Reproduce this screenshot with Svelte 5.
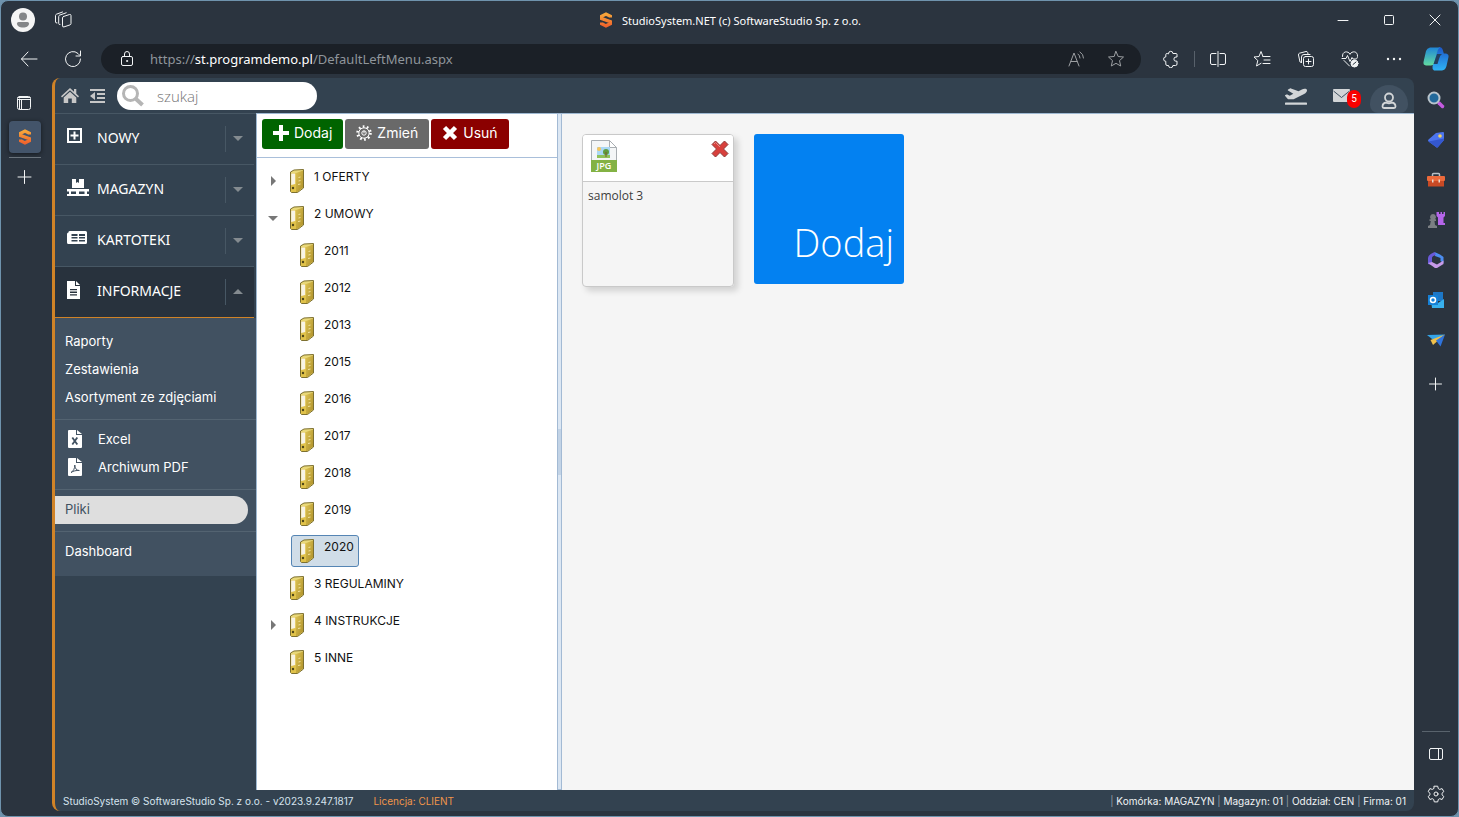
<script lang="ts">
  type MenuItem = { id: string; label: string; open?: boolean };
  type Folder = { label: string; level: number; toggle?: 'open' | 'closed' };

  const menu: MenuItem[] = [
    { id: 'new', label: 'NOWY' },
    { id: 'stock', label: 'MAGAZYN' },
    { id: 'cards', label: 'KARTOTEKI' },
    { id: 'info', label: 'INFORMACJE', open: true }
  ];

  const submenu = [
    [{ label: 'Raporty' }, { label: 'Zestawienia' }, { label: 'Asortyment ze zdjęciami' }],
    [{ label: 'Excel', icon: 'xls' }, { label: 'Archiwum PDF', icon: 'pdf' }],
    [{ label: 'Pliki', active: true }],
    [{ label: 'Dashboard' }]
  ] as { label: string; icon?: string; active?: boolean }[][];

  const folders: Folder[] = [
    { label: '1 OFERTY', level: 0, toggle: 'closed' },
    { label: '2 UMOWY', level: 0, toggle: 'open' },
    { label: '2011', level: 1 },
    { label: '2012', level: 1 },
    { label: '2013', level: 1 },
    { label: '2015', level: 1 },
    { label: '2016', level: 1 },
    { label: '2017', level: 1 },
    { label: '2018', level: 1 },
    { label: '2019', level: 1 },
    { label: '2020', level: 1 },
    { label: '3 REGULAMINY', level: 0 },
    { label: '4 INSTRUKCJE', level: 0, toggle: 'closed' },
    { label: '5 INNE', level: 0 }
  ];

  let selected = $state('2020');
  let search = $state('');
</script>

{#snippet logo(size: number)}
  <svg width={size} height={size} viewBox="0 0 16 16">
    <defs>
      <linearGradient id="logo-fill" x1="0" y1="0" x2="0" y2="1">
        <stop offset="0" stop-color="#f7a63a" />
        <stop offset="1" stop-color="#f0642c" />
      </linearGradient>
    </defs>
    <path fill="none" stroke="url(#logo-fill)" stroke-width="3.400" d="M12.300 5.600V4.300L8 2.100 3.700 4.300v2.200l8.600 3.200v2.100L8 13.900l-4.300-2.200v-1.300" />
  </svg>
{/snippet}

{#snippet menuIcon(id: string)}
  <svg class="menu-icon" width="24" height="20" viewBox="0 0 24 20">
    {#if id === 'new'}
      <path fill="none" stroke="#fff" stroke-width="2" d="M1 2h13v13H1z" />
      <path fill="none" stroke="#fff" stroke-width="2" d="M7.500 4.500v8M3.500 8.500h8" />
    {:else if id === 'stock'}
      <path fill="#fff" d="M5 1h4v4l1.500-1L12 5V1h5v9H5zM0 11h22v2.500h-2V16h2v2H0v-2h2v-2.500H0zm4 2.500V16h5v-2.500zm8 0V16h5.500v-2.500z" />
    {:else if id === 'cards'}
      <path fill="#fff" fill-rule="evenodd" d="M3 2h15.500q1.500 0 1.500 1.500v10q0 1.500-1.500 1.500h-17Q0 15 0 13.500V5q0-1.500 1.500-1.500V3Q1.500 2 3 2zM4.500 5v2h6V5zm7.500 0v2h6V5zM4.500 8v1.500h6V8zm7.500 0v1.500h6V8zm-7.500 3v1.500h6V11zm7.500 0v1.500h6V11z" />
    {:else}
      <path fill="#fff" fill-rule="evenodd" d="M0 1h8v5h5v13H0zM3 9v1.300h7V9zm0 2.600v1.300h7v-1.300zm0 2.600v1.300h7v-1.300z" />
      <path fill="#fff" d="M9 1l4 4H9z" />
    {/if}
  </svg>
{/snippet}

{#snippet fileIcon(kind: string)}
  <svg width="14" height="18" viewBox="0 0 14 18">
    <path fill="#fff" d="M1 0h7v5h6v12q0 1-1 1H1q-1 0-1-1V1q0-1 1-1zM9 0l5 4H9z" />
    {#if kind === 'xls'}
      <path fill="none" stroke="#415161" stroke-width="1.800" d="M4.300 7.500l5 7M9.300 7.500l-5 7" />
    {:else}
      <path fill="none" stroke="#415161" d="M3 14.500c2-1 4-4 3.800-7.500 0 3 1.500 5.500 4.500 5.500-3-.300-6 .500-8.300 2z" />
    {/if}
  </svg>
{/snippet}

{#snippet binder()}
  <svg width="16" height="26" viewBox="0 0 16 26">
    <defs>
      <linearGradient id="binder-face" x1="0" y1="0" x2="1" y2="1">
        <stop offset="0" stop-color="#dcc253" />
        <stop offset="1" stop-color="#ae9029" />
      </linearGradient>
    </defs>
    <path fill="#e9d878" stroke="#7d7030" d="M1.500 4L5 2l9.500-.500V20L8.500 24.500h-6l-1-1z" />
    <path fill="#e0c24a" d="M2 5h5v19H2z" />
    <path fill="#f8f4e6" d="M2.200 5.500h4V16l-4 1z" />
    <path fill="url(#binder-face)" d="M7 5l7-2.500v17L8.500 24H7z" />
    <path fill="none" stroke="#f2e3a0" d="M9.500 9.500l2-.500M9.500 13l2-.500M9 16.500l2.500-.500" />
    <circle cx="4" cy="20" r="1.200" fill="#4e4618" />
  </svg>
{/snippet}

<div class="window">
  <header class="titlebar">
    <div class="title-left">
      <button class="profile" aria-label="Profil">
        <svg width="24" height="24" viewBox="0 0 24 24">
          <circle cx="12" cy="12" r="12" fill="#f5f5f5" />
          <circle cx="12" cy="8.500" r="4" fill="#848688" />
          <path fill="#848688" d="M7.500 14h9q1.500 0 1.500 1.500c0 2.500-2.500 4-6 4s-6-1.500-6-4Q6 14 7.500 14z" />
        </svg>
      </button>
      <button class="icon-btn" aria-label="Obszary robocze">
        <svg class="line" width="18" height="18" viewBox="0 0 18 18">
          <path d="M9.500 5.500l6-2q1.500-.300 1.500 1v8q0 1-1 1.400l-6 2q-1.500.400-1.500-1v-8q0-1 1-1.400zM6 13.500q-1.300.300-1.300-1v-7q0-1 1-1.400l6.500-2.300M3 12q-1.500.200-1.500-1V4.600q0-1 1-1.400L8.500 1" />
        </svg>
      </button>
    </div>
    <div class="page-title">{@render logo(16)}<span>StudioSystem.NET (c) SoftwareStudio Sp. z o.o.</span></div>
    <div class="window-controls">
      <button aria-label="Minimalizuj"><svg class="line" width="12" height="12" viewBox="0 0 12 12"><path d="M1 6.500h10" /></svg></button>
      <button aria-label="Maksymalizuj"><svg class="line" width="12" height="12" viewBox="0 0 12 12"><rect x="1.500" y="1.500" width="9" height="9" rx="1" /></svg></button>
      <button aria-label="Zamknij"><svg class="line" width="12" height="12" viewBox="0 0 12 12"><path d="M1 1l10 10M11 1L1 11" /></svg></button>
    </div>
  </header>

  <nav class="toolbar">
    <button class="tool" aria-label="Wstecz"><svg class="line" width="18" height="18" viewBox="0 0 18 18"><path d="M17 9H1.500M8 2L1.500 9 8 16" /></svg></button>
    <button class="tool" aria-label="Odśwież"><svg class="line" width="18" height="18" viewBox="0 0 18 18"><path d="M16.500 9A7.500 7.500 0 1 1 14 3.500l2 2M16.500 1v5H12" /></svg></button>
    <div class="address">
      <svg class="line" width="16" height="18" viewBox="0 0 16 18"><rect x="2.500" y="6.500" width="11" height="9" rx="1.500" /><path d="M5.500 6.500V4a2.500 2.500 0 0 1 5 0v2.500" /><circle cx="8" cy="11" r=".6" /></svg>
      <span class="url">https://<b>st.programdemo.pl</b>/DefaultLeftMenu.aspx</span>
      <button class="address-btn" aria-label="Czytaj na głos"><svg class="line" width="18" height="18" viewBox="0 0 18 18"><path d="M2 16L7 3l5 13M4 11.500h6M11 4q2 1.500 2 4M13 2q3.500 2 3.500 6" /></svg></button>
      <button class="address-btn" aria-label="Ulubione"><svg class="line" width="18" height="18" viewBox="0 0 18 18"><path d="M9 1.500l2.200 5 5.300.500-4 3.600 1.200 5.400L9 13.300 4.300 16l1.200-5.400-4-3.600 5.300-.500z" /></svg></button>
    </div>
    <button class="tool" aria-label="Rozszerzenia"><svg class="line" width="18" height="18" viewBox="0 0 18 18"><path d="M6.500 3.500a2.200 2.200 0 0 1 4.400 0H14q1 0 1 1V7h-1a2 2 0 0 0 0 4.200h1V14q0 1.500-1.500 1.500h-2.600a2.200 2.200 0 0 1-4.400 0H5Q3.800 15.500 3.800 14v-2.700a2.200 2.200 0 0 1 0-4.400V4.500q0-1 1-1z" /></svg></button>
    <span class="tool-divider"></span>
    <button class="tool" aria-label="Podziel ekran"><svg class="line" width="18" height="18" viewBox="0 0 18 18"><path d="M7 3.500H3q-1.500 0-1.500 1.500v8q0 1.500 1.500 1.500h4M11 3.500h4q1.500 0 1.500 1.500v8q0 1.500-1.500 1.500h-4M9 1.500v15" /></svg></button>
    <button class="tool" aria-label="Lista ulubionych"><svg class="line" width="18" height="18" viewBox="0 0 18 18"><path d="M10 6.500L8 1.500 6 6.500l-5 .500 3.800 3.500-1.300 5.500 4.500-2.700M10 6.500h7M11 10h6M10 13.500h7" /></svg></button>
    <button class="tool" aria-label="Kolekcje"><svg class="line" width="18" height="18" viewBox="0 0 18 18"><rect x="6.500" y="6.500" width="10" height="10" rx="2" /><path d="M11.500 9v5M9 11.500h5M4.500 12.500L3 12 1.500 5Q1.300 3.600 2.500 3.200L9 1.500q1.300-.200 1.700 1L11 4M4.500 12.500V7Q4.500 4.500 7 4.500h6" /></svg></button>
    <button class="tool" aria-label="Podstawowe elementy przeglądarki"><svg class="line" width="18" height="18" viewBox="0 0 18 18"><path d="M9 4C7 .500 1 1 1.500 6.500M9 4c2-3.500 8-3 7.500 2.500q0 1-.7 2M3 10.500L8.500 16M1 8.500h4l1.500-3 2.500 6 2-4 1 1.500h3" /><circle cx="13.500" cy="13.500" r="3.500" fill="#f2f4f5" /><path class="dark" d="M12 14.500l3-2.500" /></svg></button>
    <button class="tool" aria-label="Więcej"><svg width="18" height="18" viewBox="0 0 18 18" fill="#f2f4f5"><circle cx="3" cy="9" r="1.200" /><circle cx="9" cy="9" r="1.200" /><circle cx="15" cy="9" r="1.200" /></svg></button>
    <button class="side-btn" aria-label="Copilot">
      <svg width="26" height="24" viewBox="0 0 26 24">
        <defs>
          <linearGradient id="cop-a" x1="0" y1="0" x2="0" y2="1"><stop offset="0" stop-color="#1f86d8" /><stop offset="1" stop-color="#62dba0" /></linearGradient>
          <linearGradient id="cop-b" x1="0" y1="0" x2="0" y2="1"><stop offset="0" stop-color="#1c55c8" /><stop offset="1" stop-color="#2fb4f5" /></linearGradient>
        </defs>
        <path fill="url(#cop-b)" d="M12 8l4-8q3 0 3.800 3l1 3.500H23q3 .500 2.500 3.500l-2 9q-1 4-4.500 4.500h-8q-2-1-1.500-4z" />
        <path fill="url(#cop-a)" d="M7 .500h10q-2 1-3 5l-3 11q-.700 2-3 2H3q-3-.500-2.500-3.500L3 4q1-3 4-3.500z" />
        <path fill="#24405f" d="M14 7h5q-2 1-3 5l-1.500 5h-4z" />
      </svg>
    </button>
  </nav>

  <div class="body">
    <aside class="tabs">
      <button class="tab" aria-label="Karty pionowe"><svg class="line" width="16" height="16" viewBox="0 0 16 16"><rect x=".5" y="1.500" width="13" height="13" rx="2" /><path d="M1 4.500h12M4.500 4.500v10M1 2.500h12M2.500 4v10" /></svg></button>
      <button class="tab current" aria-label="StudioSystem.NET">{@render logo(16)}</button>
      <hr />
      <button class="tab" aria-label="Nowa karta"><svg class="line" width="16" height="16" viewBox="0 0 16 16"><path d="M7.500 1.500v13M1 8h13" /></svg></button>
    </aside>

    <div class="app">
      <header class="app-header">
        <a href="/home" aria-label="Strona główna"><svg width="18" height="16" viewBox="0 0 18 16" fill="#c7c7c7"><path d="M9 0l4 3.700V1h2.300v4.800L18 8.300l-1 1.200-8-7.200-8 7.200L0 8.300z" /><path d="M9 3.800l6.300 5.600V15h-4.500v-4.500H7.200V15H2.700V9.400z" /></svg></a>
        <button class="icon-btn" aria-label="Zwiń menu"><svg width="16" height="16" viewBox="0 0 16 16" fill="#c7c7c7"><path d="M0 1h15v2H0zM7 5h8v2H7zM7 9h8v2H7zM0 13h15v2H0zM5 4v8L0 8z" /></svg></button>
        <label class="search">
          <svg width="22" height="22" viewBox="0 0 22 22" fill="none" stroke="#b5b5b5"><circle cx="8.500" cy="8.500" r="7" stroke-width="3" /><path stroke-width="4" d="M14 14l6.500 6" /></svg>
          <input type="text" placeholder="szukaj" aria-label="szukaj" bind:value={search} />
        </label>
        <div class="header-right">
          <button class="icon-btn" aria-label="Wyjazdy">
            <svg width="22" height="18" viewBox="0 0 640 512" fill="#d2d5d7"><path d="M624 448H16c-8.840 0-16 7.160-16 16v32c0 8.840 7.160 16 16 16h608c8.840 0 16-7.160 16-16v-32c0-8.840-7.160-16-16-16zM80.550 341.270c6.280 6.840 15.100 10.720 24.330 10.710l130.540-.180a65.620 65.620 0 0 0 29.640-7.120l290.960-147.650c26.740-13.570 50.710-32.940 67.020-58.310 18.310-28.480 20.300-49.090 13.070-63.650-7.210-14.570-24.740-25.270-58.250-27.450-29.850-1.940-59.540 5.920-86.280 19.480l-98.510 49.990-218.700-82.060a17.799 17.799 0 0 0-18-1.110L90.620 67.290c-10.670 5.410-13.250 19.650-5.170 28.530l156.220 98.100-103.210 52.380-72.350-36.470a17.804 17.804 0 0 0-16.070.020L9.910 230.220c-10.440 5.300-13.190 19.120-5.570 28.080l76.210 82.970z" /></svg>
          </button>
          <button class="icon-btn mail" aria-label="Wiadomości">
            <svg width="17" height="13" viewBox="0 0 17 13"><rect width="17" height="13" rx="1" fill="#d2d5d7" /><path fill="none" stroke="#415161" d="M.500 2l8 6.500 8-6.500" /></svg>
            <span class="badge">5</span>
          </button>
          <button class="user" aria-label="Użytkownik">
            <svg width="16" height="18" viewBox="0 0 16 18" fill="none" stroke="#d2d5d7" stroke-width="1.800"><circle cx="8" cy="5.500" r="4" /><path d="M5.500 10.500Q1.500 11 1.500 14.500q0 1.500 1.500 1.500h10q1.500 0 1.500-1.500 0-3.500-4-4-2.500 1.500-5 0z" /></svg>
          </button>
        </div>
      </header>

      <div class="app-main">
        <nav class="menu">
          {#each menu as item}
            <div class="menu-item" class:open={item.open}>
              <a href="#{item.id}">{@render menuIcon(item.id)}{item.label}</a>
              <button aria-label="Rozwiń {item.label}"><span class="caret" class:up={item.open}></span></button>
            </div>
          {/each}
          <div class="submenu">
            {#each submenu as group}
              <ul>
                {#each group as link}
                  <li>
                    <a href="#{link.label}" class:active={link.active}>
                      {#if link.icon}<span class="file-icon">{@render fileIcon(link.icon)}</span>{/if}{link.label}
                    </a>
                  </li>
                {/each}
              </ul>
            {/each}
          </div>
        </nav>

        <section class="tree-pane">
          <div class="actions">
            <button class="add"><svg width="16" height="16" viewBox="0 0 16 16"><path fill="none" stroke="#fff" stroke-width="4" d="M8 0v16M0 8h16" /></svg><span>Dodaj</span></button>
            <button class="edit"><svg width="16" height="16" viewBox="0 0 16 16" fill="none" stroke="#fff"><circle cx="8" cy="8" r="6.500" stroke-width="2.500" stroke-dasharray="1.700 2.384" /><circle cx="8" cy="8" r="5.200" /><circle cx="8" cy="8" r="2.200" /><path d="M8 5.800v2.500" /></svg><span>Zmień</span></button>
            <button class="remove"><svg width="16" height="16" viewBox="0 0 16 16"><path fill="none" stroke="#fff" stroke-width="4.500" d="M2.500 2.500l11 11M13.500 2.500l-11 11" /></svg><span>Usuń</span></button>
          </div>
          <ul class="tree">
            {#each folders as folder}
              <li class:child={folder.level > 0}>
                <span class="toggle">
                  {#if folder.toggle}
                    <button class:expanded={folder.toggle === 'open'} aria-label="Rozwiń {folder.label}"></button>
                  {/if}
                </span>
                <button class="node" class:selected={folder.label === selected} onclick={() => (selected = folder.label)}>
                  {@render binder()}<span>{folder.label}</span>
                </button>
              </li>
            {/each}
          </ul>
        </section>

        <div class="splitter"><span></span></div>

        <main>
          <article class="file-card">
            <div class="file-head">
              <svg width="26" height="32" viewBox="0 0 26 32">
                <path fill="#f4f6f7" stroke="#a9aeb2" d="M.500.500h18l7 7v24H.500z" />
                <path fill="#fff" stroke="#a9aeb2" d="M18.500.500v7h7z" />
                <path fill="#a9d8f5" d="M6 7h13v8H6z" />
                <path fill="#8fc25a" d="M6 15h13v3H6z" />
                <circle cx="8" cy="9" r="2" fill="#f7c65b" />
                <circle cx="15" cy="12" r="3" fill="#5f9c3f" />
                <path stroke="#7b5a2f" d="M15 12v5" />
                <path fill="#83b244" d="M0 20h26v12H0z" />
                <text x="13" y="29" text-anchor="middle" fill="#fff" font-size="9" font-weight="600">JPG</text>
              </svg>
              <button class="icon-btn" aria-label="Usuń plik">
                <svg width="18" height="18" viewBox="0 0 18 18"><path fill="#d8403c" stroke="#8c3a38" d="M4.500 1L9 5.500 13.500 1 17 4.500 12.500 9l4.500 4.500-3.500 3.500L9 12.500 4.500 17 1 13.500 5.500 9 1 4.500z" /><path stroke="#e58e8a" d="M3 4l1.500-1.500L9 7" fill="none" /></svg>
              </button>
            </div>
            <p>samolot 3</p>
          </article>
          <button class="add-tile">Dodaj</button>
        </main>
      </div>

      <footer>
        <span>StudioSystem © SoftwareStudio Sp. z o.o. - v2023.9.247.1817</span>
        <span class="licence">Licencja: CLIENT</span>
        <span class="context"><i>|</i> Komórka: MAGAZYN <i>|</i> Magazyn: 01 <i>|</i> Oddział: CEN <i>|</i> Firma: 01</span>
      </footer>
    </div>

    <aside class="sidebar">
      <button class="side-btn" aria-label="Szukaj"><svg width="18" height="18" viewBox="0 0 18 18"><path stroke="#c45ae0" stroke-width="3.500" stroke-linecap="round" d="M12 12l3.500 3.500" /><circle cx="7" cy="7" r="5.500" fill="#22699b" stroke="#b9c4cc" stroke-width="2" /></svg></button>
      <button class="side-btn" aria-label="Zakupy"><svg width="18" height="18" viewBox="0 0 18 18"><path fill="#4c74ee" d="M9 2l7-1q1 0 1 1v7l-6 7q-1 1-2 0L1.500 10.500q-1-1 0-2z" /><path fill="#3457cf" d="M1.500 10.500l15.500-3V9l-6 7q-1 1-2 0z" /><circle cx="13" cy="5" r="1.800" fill="#f5d35c" /></svg></button>
      <button class="side-btn" aria-label="Narzędzia"><svg width="18" height="18" viewBox="0 0 18 18"><path fill="none" stroke="#b8bfc5" stroke-width="1.500" d="M5.500 5V3.500q0-1 1-1h5q1 0 1 1V5" /><rect y="5" width="18" height="5" rx="1" fill="#ec6a3b" /><path fill="#c94a25" d="M1 10h16v5.500H1z" /><path fill="#e9d9cf" d="M5 8.500h1.500v3H5zm6.500 0H13v3h-1.500z" /></svg></button>
      <button class="side-btn" aria-label="Gry"><svg width="18" height="18" viewBox="0 0 18 18"><path fill="#b565ea" d="M9.500 1H12v2h1.500V1H15v2h1.500V1H18v4l-1.500 1.500V12H18v2h-7V6.500L9.500 5z" /><path fill="#7b7f83" d="M6 3a3 3 0 0 1 2 5.200h1V10H7.500l.500 4 2 1v2H1v-2l2-1 .800-4H2.500V8.200H4A3 3 0 0 1 6 3z" /></svg></button>
      <button class="side-btn" aria-label="Microsoft 365"><svg width="18" height="18" viewBox="0 0 18 18"><path fill="#4c8df0" d="M7.500 1L13 3.500 16.500 6v6l-3-2V7L8 5z" /><path fill="#6a5ad8" d="M7.500 1Q1 3.500 1 7v6l4 1V7q0-2 4-3z" /><path fill="#c69ae8" d="M1 12l4-1 5 2.500 6.500-4V13L10 17H8z" /></svg></button>
      <button class="side-btn" aria-label="Outlook"><svg width="18" height="18" viewBox="0 0 18 18"><path fill="#1d78c8" d="M6 1h10v9H6z" /><path fill="#38b1ee" d="M4 9l7 3 6-4v9H5z" /><path fill="#1580d6" d="M1 4h10v10H1z" /><circle cx="6" cy="9" r="2.500" fill="none" stroke="#fff" stroke-width="1.500" /></svg></button>
      <button class="side-btn" aria-label="Drop"><svg width="18" height="18" viewBox="0 0 18 18"><path fill="#35a4e8" d="M0 4l18-.500L7 9.500z" /><path fill="#f0c04a" d="M3.500 9L18 3.500 6 14z" /><path fill="#2f74dd" d="M9 9.500l9-6-4.500 12z" /></svg></button>
      <button class="side-btn side-add" aria-label="Dodaj"><svg class="line" width="14" height="14" viewBox="0 0 14 14"><path d="M6.500 1v12M.500 7h12" /></svg></button>
      <div class="side-bottom">
        <hr />
        <button class="side-btn" aria-label="Pasek boczny"><svg class="line" width="16" height="16" viewBox="0 0 16 16"><rect x="1.500" y="2.500" width="13" height="11" rx="1.500" /><path d="M10.500 2.500v11" /></svg></button>
        <button class="side-btn" aria-label="Ustawienia"><svg class="line" width="18" height="18" viewBox="0 0 18 18"><circle cx="9" cy="9" r="2" /><path d="M7.300 1.200h3.400l.6 2.400 1.400.8 2.400-.8 1.700 3-1.800 1.700v1.500l1.800 1.700-1.700 3-2.400-.8-1.400.8-.6 2.400H7.300l-.6-2.400-1.400-.8-2.400.8-1.700-3 1.800-1.700V8.300L1.200 6.600l1.700-3 2.400.8 1.400-.8z" /></svg></button>
      </div>
    </aside>
  </div>
</div>

<style>
  :global(body) {
    background: #6f93ad;
  }

  .window {
    display: flex;
    flex-direction: column;
    box-sizing: border-box;
    min-height: 100vh;
    border: 1px solid #6f93ad;
    border-radius: 8px;
    background: #2b343f;
    color: #fff;
    font-family: 'Noto Sans', 'Open Sans', sans-serif;
    font-size: 11px;
    overflow: hidden;
  }

  button {
    display: flex;
    align-items: center;
    justify-content: center;
    margin: 0;
    padding: 0;
    border: 0;
    background: none;
    color: inherit;
    font: inherit;
    cursor: pointer;
  }

  a {
    color: inherit;
    text-decoration: none;
  }

  svg {
    display: block;
    flex: none;
  }

  ul {
    margin: 0;
    padding: 0;
    list-style: none;
  }

  .line {
    fill: none;
    stroke: #f2f4f5;
    stroke-linecap: round;
    stroke-linejoin: round;
  }

  .line .dark {
    stroke: #2b343f;
  }

  /* browser chrome */
  .titlebar {
    display: grid;
    grid-template-columns: 1fr auto 1fr;
    align-items: center;
    height: 38px;
  }

  .title-left {
    display: flex;
    align-items: center;
    gap: 19px;
    padding-left: 10px;
  }

  .page-title {
    display: flex;
    align-items: center;
    gap: 8px;
  }

  .window-controls {
    display: flex;
    justify-content: flex-end;
  }

  .window-controls button {
    width: 46px;
    height: 38px;
  }

  .toolbar {
    display: flex;
    align-items: center;
    height: 38px;
    padding: 1px 2px 0 6px;
  }

  .tool {
    width: 44px;
    height: 38px;
  }

  .tool-divider {
    width: 1px;
    height: 16px;
    margin: 0 1px;
    background: #58616b;
  }

  .address {
    display: flex;
    flex: 1;
    align-items: center;
    height: 30px;
    margin: 0 8px 0 6px;
    padding: 0 5px 0 18px;
    border-radius: 15px;
    background: #1b2027;
  }

  .url {
    flex: 1;
    margin-left: 15px;
    color: #8f959b;
    font-size: 13px;
  }

  .url b {
    color: #fff;
    font-weight: 400;
  }

  .address-btn {
    width: 40px;
    height: 30px;
    opacity: 0.6;
  }

  .body {
    display: flex;
    flex: 1;
  }

  .tabs {
    display: flex;
    flex-direction: column;
    align-items: center;
    width: 49px;
    padding: 8px 2px 0 0;
    box-sizing: border-box;
    margin-right: 2px;
  }

  .tab {
    width: 32px;
    height: 34px;
  }

  .tab.current {
    height: 32px;
    margin-top: 1px;
    border-radius: 4px;
    background: #43546a;
    box-shadow: 0 1px 4px #15191e;
  }

  .tabs hr {
    width: 32px;
    margin: 4px 0 2px;
    border: 0;
    border-top: 1px solid #6b747d;
  }

  .side-btn {
    width: 40px;
    height: 40px;
  }

  .side-add {
    height: 48px;
  }

  .sidebar {
    display: flex;
    flex-direction: column;
    align-items: center;
    width: 44px;
    padding-top: 2px;
    box-sizing: border-box;
  }

  .side-bottom {
    margin-top: auto;
    padding-bottom: 2px;
  }

  .side-bottom hr {
    width: 28px;
    margin: 0 auto 2px;
    border: 0;
    border-top: 1px solid #59636d;
  }

  /* application frame */
  .app {
    display: flex;
    flex: 1;
    flex-direction: column;
    margin-bottom: 5px;
    border-left: 3px solid #d08327;
    border-radius: 8px;
    background: #334250;
    overflow: hidden;
  }

  .app-header {
    display: flex;
    align-items: center;
    height: 35px;
    padding: 0 6px;
    gap: 11px;
  }

  .search {
    display: flex;
    align-items: center;
    width: 200px;
    height: 28px;
    padding: 0 5px;
    box-sizing: border-box;
    border-radius: 14px;
    background: #fff;
  }

  .search input {
    flex: 1;
    min-width: 0;
    padding: 0 0 0 13px;
    border: 0;
    background: none;
    color: #333;
    font: 300 15px 'Open Sans', sans-serif;
    outline: 0;
  }

  .search input::placeholder {
    color: #757575;
    opacity: 1;
  }

  .header-right {
    display: flex;
    align-items: center;
    height: 35px;
    margin-left: auto;
  }

  .mail {
    margin: 0 9px 0 26px;
  }

  .badge {
    width: 14px;
    margin: 6px 0 0 -3px;
    border-radius: 9px;
    background: #f80000;
    font: 10px/18px Roboto, sans-serif;
  }

  .user {
    align-self: flex-end;
    width: 38px;
    height: 28px;
    padding-top: 4px;
    border-radius: 19px 19px 8px 8px;
    background: #415161;
  }

  .app-main {
    display: flex;
    flex: 1;
  }

  .menu {
    width: 201px;
    border-top: 1px solid #475764;
  }

  .menu-item {
    display: flex;
    align-items: center;
    height: 50px;
    margin-right: 2px;
    border-bottom: 1px solid #475764;
    font-size: 14px;
  }

  .menu-item.open {
    border-bottom-color: #d08327;
    background: #28323d;
  }

  .menu-item a {
    display: flex;
    flex: 1;
    align-items: center;
    height: 100%;
    padding: 0 0 4px 12px;
    box-sizing: border-box;
  }

  .menu-icon {
    margin-right: 6px;
  }

  .menu-item button {
    width: 29px;
    height: 26px;
    padding: 0 4px 2px 0;
    border-left: 1px solid #475764;
  }

  .caret {
    border: 5px solid transparent;
    border-top-color: #848b90;
    border-bottom: 0;
  }

  .caret.up {
    border-top: 0;
    border-bottom: 5px solid #848b90;
  }

  .submenu {
    padding: 4px 0 3px;
    background: #415161;
    font-family: Inter, sans-serif;
    font-size: 13px;
  }

  .submenu ul {
    padding: 6px 0 7px;
  }

  .submenu ul + ul {
    border-top: 1px solid #536371;
  }

  .submenu a {
    display: flex;
    align-items: center;
    height: 28px;
    margin-right: 8px;
    padding: 0 0 2px 10px;
    box-sizing: border-box;
  }

  .submenu a.active {
    border-radius: 0 14px 14px 0;
    background: #dedede;
    color: #415161;
  }

  .file-icon {
    width: 30px;
    padding-left: 3px;
  }

  .tree-pane {
    width: 300px;
    border: solid #9fb9d2;
    border-width: 1px 0 0 1px;
    background: #fff;
    color: #111;
    font-family: Inter, sans-serif;
    font-size: 12px;
  }

  .actions {
    display: flex;
    gap: 2px;
    height: 38px;
    padding: 5px 5px 0;
    border-bottom: 1px solid #a9bfda;
    color: #fff;
    font-size: 14px;
  }

  .actions button {
    gap: 5px;
    height: 30px;
    padding: 0 11px 2px;
    border-radius: 3px;
  }

  .actions span {
    padding-bottom: 2px;
  }

  .add {
    background: #006400;
  }

  .edit {
    background: #696969;
  }

  .remove {
    background: #8b0000;
  }

  .tree {
    display: flex;
    flex-direction: column;
    gap: 5px;
    padding: 7px 0 7px 8px;
  }

  .tree li {
    display: flex;
    height: 32px;
  }

  .tree .child {
    padding-left: 10px;
  }

  .toggle {
    width: 16px;
  }

  .toggle button {
    width: 16px;
    height: 32px;
  }

  .toggle button::before {
    border: 5px solid transparent;
    border-left-color: #777;
    border-right: 0;
    content: '';
  }

  .toggle .expanded::before {
    border: 5px solid transparent;
    border-top-color: #777;
    border-bottom: 0;
  }

  .node {
    gap: 9px;
    padding: 0 4px 0 7px;
    border: 1px solid transparent;
    border-radius: 3px;
  }

  .node span {
    padding-bottom: 9px;
  }

  .node.selected {
    border-color: #5585b4;
    background: #d0dde8;
  }

  .splitter {
    display: flex;
    align-items: center;
    width: 3px;
    border: 1px solid #a3bad4;
    background: #dce7f3;
  }

  .splitter span {
    width: 3px;
    height: 46px;
    background: #c2d3e6;
  }

  main {
    display: flex;
    flex: 1;
    align-items: flex-start;
    gap: 20px;
    padding: 20px;
    border-top: 1px solid #9fb9d2;
    background: #f5f5f5;
    font-family: 'Open Sans', sans-serif;
  }

  .file-card {
    width: 150px;
    min-height: 151px;
    border: 1px solid #c9c9c9;
    border-radius: 4px;
    box-shadow: 4px 4px 6px rgba(0, 0, 0, 0.15);
    color: #3d3d3d;
    overflow: hidden;
  }

  .file-head {
    display: flex;
    align-items: flex-start;
    justify-content: space-between;
    height: 41px;
    padding: 5px 4px 0 8px;
    border-bottom: 1px solid #c9c9c9;
    background: #fff;
  }

  .file-card p {
    margin: 5px;
    font-size: 12px;
    line-height: 18px;
  }

  .add-tile {
    align-items: flex-end;
    justify-content: flex-end;
    width: 150px;
    height: 150px;
    padding: 0 10px 16px;
    border-radius: 3px;
    background: #0381f1;
    color: #fff;
    font-size: 38px;
    font-weight: 300;
  }

  footer {
    display: flex;
    align-items: center;
    height: 21px;
    padding: 0 8px;
    color: #d5e2ee;
    font: 10px Inter, sans-serif;
  }

  .licence {
    margin-left: 20px;
    color: #f0954a;
  }

  .context {
    margin-left: auto;
    color: #f0f3f5;
  }

  .context i {
    color: #8f9ba5;
    font-style: normal;
  }
</style>
